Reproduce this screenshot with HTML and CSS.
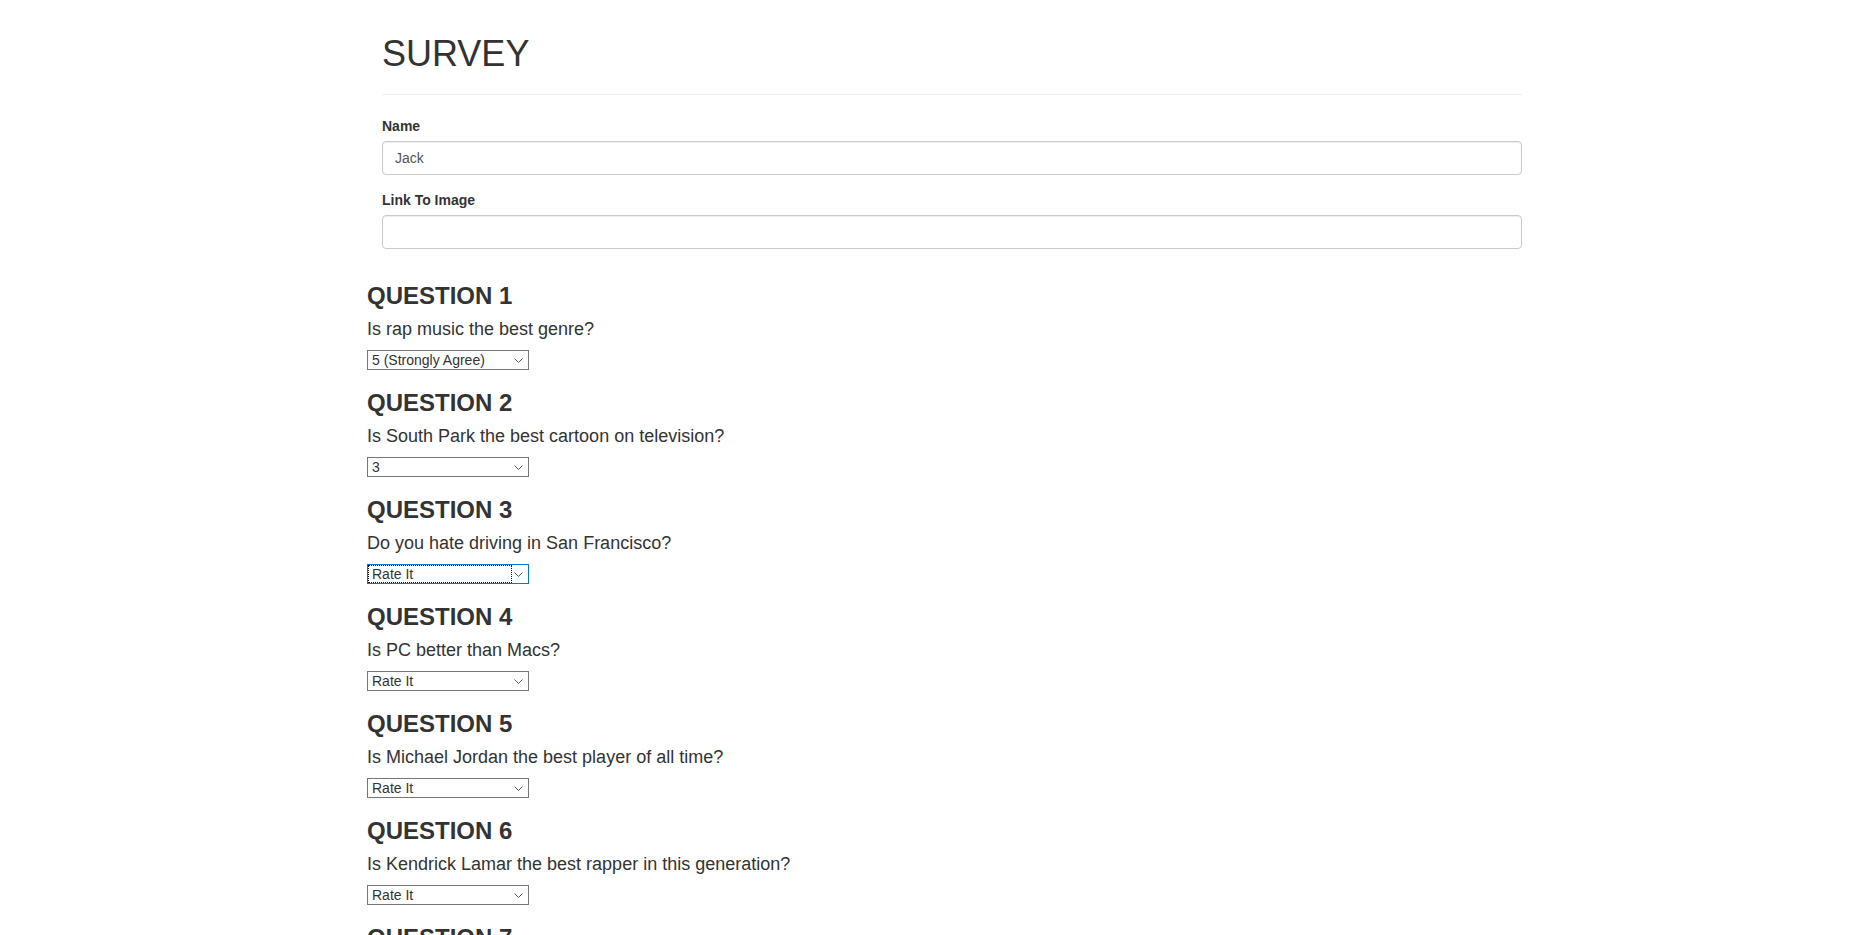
FILE: index.html
```html
<!DOCTYPE html>
<html lang="en">
<head>
<meta charset="utf-8">
<title>Survey</title>
<link rel="stylesheet" href="styles.css">
</head>
<body>
<div class="page">
  <header class="survey-head">
    <div class="page-header"><h1>SURVEY</h1></div>
    <form class="profile">
      <div class="form-group">
        <label for="name">Name</label>
        <input id="name" class="form-control" type="text" value="Jack">
      </div>
      <div class="form-group">
        <label for="photo">Link To Image</label>
        <input id="photo" class="form-control" type="text" value="">
      </div>
    </form>
  </header>

  <section class="question">
    <h3>QUESTION 1</h3>
    <p>Is rap music the best genre?</p>
    <div class="select-wrap">
      <select class="rate">
        <option>Rate It</option><option>1 (Strongly Disagree)</option><option>2</option><option>3</option><option>4</option><option selected>5 (Strongly Agree)</option>
      </select>
      <svg class="chev" width="9" height="5" viewBox="0 0 9 5"><path d="M0.5 0.5 L4.5 4.5 L8.5 0.5" /></svg>
    </div>
  </section>

  <section class="question">
    <h3>QUESTION 2</h3>
    <p>Is South Park the best cartoon on television?</p>
    <div class="select-wrap">
      <select class="rate">
        <option>Rate It</option><option>1 (Strongly Disagree)</option><option>2</option><option selected>3</option><option>4</option><option>5 (Strongly Agree)</option>
      </select>
      <svg class="chev" width="9" height="5" viewBox="0 0 9 5"><path d="M0.5 0.5 L4.5 4.5 L8.5 0.5" /></svg>
    </div>
  </section>

  <section class="question">
    <h3>QUESTION 3</h3>
    <p>Do you hate driving in San Francisco?</p>
    <div class="select-wrap is-focused">
      <select class="rate">
        <option selected>Rate It</option><option>1 (Strongly Disagree)</option><option>2</option><option>3</option><option>4</option><option>5 (Strongly Agree)</option>
      </select>
      <span class="focus-ring"></span>
      <svg class="chev" width="9" height="5" viewBox="0 0 9 5"><path d="M0.5 0.5 L4.5 4.5 L8.5 0.5" /></svg>
    </div>
  </section>

  <section class="question">
    <h3>QUESTION 4</h3>
    <p>Is PC better than Macs?</p>
    <div class="select-wrap">
      <select class="rate">
        <option selected>Rate It</option><option>1 (Strongly Disagree)</option><option>2</option><option>3</option><option>4</option><option>5 (Strongly Agree)</option>
      </select>
      <svg class="chev" width="9" height="5" viewBox="0 0 9 5"><path d="M0.5 0.5 L4.5 4.5 L8.5 0.5" /></svg>
    </div>
  </section>

  <section class="question">
    <h3>QUESTION 5</h3>
    <p>Is Michael Jordan the best player of all time?</p>
    <div class="select-wrap">
      <select class="rate">
        <option selected>Rate It</option><option>1 (Strongly Disagree)</option><option>2</option><option>3</option><option>4</option><option>5 (Strongly Agree)</option>
      </select>
      <svg class="chev" width="9" height="5" viewBox="0 0 9 5"><path d="M0.5 0.5 L4.5 4.5 L8.5 0.5" /></svg>
    </div>
  </section>

  <section class="question">
    <h3>QUESTION 6</h3>
    <p>Is Kendrick Lamar the best rapper in this generation?</p>
    <div class="select-wrap">
      <select class="rate">
        <option selected>Rate It</option><option>1 (Strongly Disagree)</option><option>2</option><option>3</option><option>4</option><option>5 (Strongly Agree)</option>
      </select>
      <svg class="chev" width="9" height="5" viewBox="0 0 9 5"><path d="M0.5 0.5 L4.5 4.5 L8.5 0.5" /></svg>
    </div>
  </section>

  <section class="question">
    <h3>QUESTION 7</h3>
  </section>
</div>
</body>
</html>
```

FILE: styles.css
```css
html, body {
  margin: 0;
  padding: 0;
  background: #fff;
}

body {
  font-family: "Liberation Sans", Arial, sans-serif;
  font-size: 14px;
  line-height: 20px;
  color: #333;
}

.page {
  box-sizing: border-box;
  width: 1172px;
  margin: 0 auto;
  padding: 0 15px;
}

.survey-head {
  width: 1140px;
  padding-left: 15px;
}

.page-header {
  margin-top: 34px;
  padding-bottom: 20px;
  border-bottom: 1px solid #eee;
  margin-bottom: 21px;
}

.page-header h1 {
  margin: 0;
  font-size: 36px;
  line-height: 40px;
  font-weight: normal;
  color: #333;
}

.profile {
  margin: 0;
}

.form-group {
  margin-bottom: 15px;
}

.form-group:last-child {
  margin-bottom: 14px;
}

.form-group label {
  display: block;
  font-size: 14px;
  line-height: 20px;
  font-weight: bold;
  margin-bottom: 5px;
  color: #333;
}

.form-control {
  display: block;
  box-sizing: border-box;
  width: 100%;
  height: 34px;
  margin: 0;
  padding: 0 12px;
  font-family: "Liberation Sans", Arial, sans-serif;
  font-size: 14px;
  color: #555;
  background: #fff;
  border: 1px solid #ccc;
  border-radius: 4px;
  box-shadow: inset 0 1px 1px rgba(0, 0, 0, 0.075);
  outline: none;
}

.question {
  display: flex;
  flex-direction: column;
  align-items: flex-start;
}

.question h3 {
  margin: 20px 0 10px;
  font-size: 24px;
  line-height: 26px;
  font-weight: bold;
  color: #333;
}

.question p {
  margin: 0 0 11px;
  font-size: 18px;
  line-height: 20px;
  color: #333;
}

.select-wrap {
  position: relative;
  width: 162px;
  height: 20px;
}

.rate {
  display: block;
  box-sizing: border-box;
  width: 162px;
  height: 20px;
  margin: 0;
  padding: 0 0 0 4px;
  font-family: "Liberation Sans", Arial, sans-serif;
  font-size: 14px;
  line-height: 18px;
  color: #333;
  background: #fff;
  border: 1px solid #767676;
  border-radius: 0;
  -webkit-appearance: none;
  appearance: none;
  outline: none;
}

.is-focused .rate {
  border-color: #0078d7;
}

.focus-ring {
  position: absolute;
  left: 1px;
  top: 1px;
  bottom: 1px;
  width: 144px;
  box-sizing: border-box;
  border: 1px dotted #111;
  pointer-events: none;
}

.chev {
  position: absolute;
  right: 6px;
  top: 8px;
  pointer-events: none;
}

.chev path {
  fill: none;
  stroke: #555;
  stroke-width: 1;
}
```
